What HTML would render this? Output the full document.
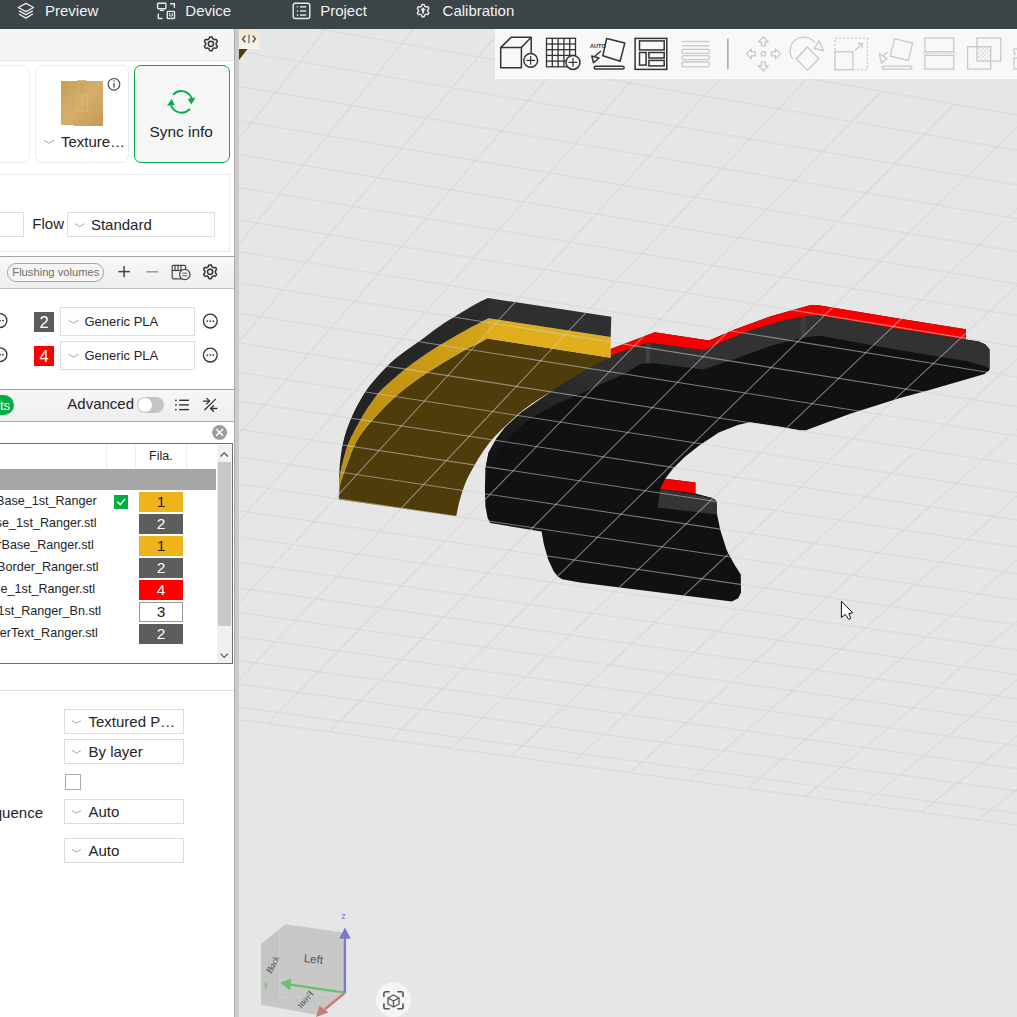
<!DOCTYPE html><html><head><meta charset="utf-8"><style>
html,body{margin:0;padding:0;width:1017px;height:1017px;overflow:hidden;background:#e6e6e6;font-family:"Liberation Sans",sans-serif}
.t{position:absolute;white-space:nowrap}.b{position:absolute;box-sizing:border-box}
</style></head><body>
<div style="position:absolute;left:239px;top:28px;width:778px;height:989px;background:#e6e6e6;overflow:hidden">
<svg width="778" height="989" viewBox="0 0 778 989" style="position:absolute;left:0;top:0"><defs><linearGradient id="gy" gradientUnits="userSpaceOnUse" x1="101" y1="0" x2="372" y2="0"><stop offset="0" stop-color="#bd8e10"/><stop offset="0.3" stop-color="#c89914"/><stop offset="0.545" stop-color="#d6a51a"/><stop offset="0.548" stop-color="#e0ae1c"/><stop offset="1" stop-color="#e1ae1c"/></linearGradient><linearGradient id="gd" gradientUnits="userSpaceOnUse" x1="101" y1="0" x2="372" y2="0"><stop offset="0" stop-color="#222222"/><stop offset="0.545" stop-color="#2b2b2b"/><stop offset="0.548" stop-color="#2f2f2f"/><stop offset="1" stop-color="#2f2f2f"/></linearGradient><linearGradient id="hl" x1="0" y1="0" x2="1" y2="0"><stop offset="0" stop-color="#4a4a4a" stop-opacity="0"/><stop offset="0.5" stop-color="#4a4a4a" stop-opacity="0.9"/><stop offset="1" stop-color="#4a4a4a" stop-opacity="0"/></linearGradient><linearGradient id="g2" gradientUnits="userSpaceOnUse" x1="461" y1="312" x2="248" y2="452"><stop offset="0" stop-color="#323232"/><stop offset="0.45" stop-color="#2e2e2e"/><stop offset="0.8" stop-color="#1c1c1c"/><stop offset="1" stop-color="#111"/></linearGradient></defs>
  <path d="M248.2,310.4 C246.7,311.3 243.6,313.3 239.1,315.6 C234.6,317.9 227.3,321.2 221.4,324.4 C215.5,327.6 209.6,331.4 203.7,335.0 C197.8,338.6 190.2,343.5 186.0,346.2 C181.8,348.9 181.5,349.0 178.2,351.4 C174.9,353.8 170.3,357.1 166.4,360.3 C162.5,363.5 158.5,366.7 154.6,370.3 C150.7,373.9 147.7,376.9 142.8,382.1 C138.0,387.3 129.9,395.8 125.5,401.5 C121.0,407.2 118.8,411.1 116.1,416.2 C113.5,421.3 112.0,425.5 109.6,432.0 C107.2,438.5 103.2,449.8 101.6,455.1 C100.1,460.4 100.6,461.3 100.3,464.0 C100.0,466.7 99.9,470.2 99.8,471.5 L217.2,488.2 C217.8,485.7 218.9,478.9 220.5,473.1 C222.1,467.3 224.3,459.9 227.0,453.6 C229.7,447.3 232.9,441.5 236.7,435.2 C240.5,428.9 244.7,421.9 249.6,415.8 C254.5,409.7 259.0,405.0 265.9,398.5 C272.8,392.0 280.1,384.6 291.0,377.0 C301.9,369.4 324.3,357.0 331.0,353.0 L372.0,329.8 Z" fill="#4e3c0a"/>
  <polygon points="371.7,320.9 415.9,304.2 470.0,312.5 496.4,301.2 531.8,288.2 571.9,277.0 581.0,277.6 661.0,290.8 726.9,301.2 726.9,311.5 739.7,313.5 746.5,316.4 750.5,321.3 750.5,342.0 745.6,345.9 690.5,362.0 661.0,370.1 611.1,385.8 579.7,397.6 567.1,402.3 560.8,402.3 540.3,398.4 511.0,394.3 499.5,396.7 479.8,404.6 460.2,417.4 445.4,429.2 433.6,441.0 426.2,450.8 456.4,454.6 456.4,465.4 473.7,469.9 477.5,473.1 478.1,486.5 481.3,501.9 487.7,522.3 495.4,536.4 501.8,546.6 502.0,564.5 499.2,570.3 492.8,573.5 341.0,554.4 323.2,551.2 318.8,548.5 314.5,543.1 309.1,531.2 304.8,516.1 302.6,503.6 251.3,495.0 248.6,490.1 246.4,478.2 245.9,462.0 246.4,440.6 249.6,424.4 257.5,410.4 265.8,399.8 282.3,384.4 301.0,371.4 321.0,358.1 348.1,341.6 371.7,329.8" fill="#111111"/>
  <polygon points="371.7,327.4 408.9,314.4 465.0,322.3 481.0,315.0 508.2,303.6 543.6,292.4 567.2,288.2 581.0,287.6 661.0,301.2 726.9,311.5 739.7,313.5 746.5,316.4 750.5,321.3 750.5,341.0 747.5,339.0 729.8,333.6 661.0,322.3 581.0,307.7 567.2,308.9 531.8,317.7 496.4,330.7 463.9,341.6 412.8,334.9 401.0,336.1 387.0,345.1 348.1,362.8 319.5,375.0 301.0,385.0 288.2,392.7 273.4,406.2 258.7,422.0 251.0,442.0 246.4,440.6 249.6,424.4 257.5,410.4 265.8,399.8 282.3,384.4 301.0,371.4 321.0,358.1 348.1,341.6 371.7,329.8" fill="url(#g2)"/>
  <polygon points="371.7,320.9 415.9,304.2 470.0,312.5 496.4,301.2 531.8,288.2 571.9,277.0 581.0,277.6 661.0,290.8 726.9,301.2 726.9,311.5 661.0,301.2 581.0,287.6 567.2,288.2 543.6,292.4 508.2,303.6 481.0,315.0 465.0,322.3 408.9,314.4 371.7,327.4" fill="#f80000"/>
  <clipPath id="gcl"><polygon points="371.7,327.4 408.9,314.4 465.0,322.3 481.0,315.0 508.2,303.6 543.6,292.4 567.2,288.2 581.0,287.6 661.0,301.2 726.9,311.5 739.7,313.5 746.5,316.4 750.5,321.3 750.5,341.0 747.5,339.0 729.8,333.6 661.0,322.3 581.0,307.7 567.2,308.9 531.8,317.7 496.4,330.7 463.9,341.6 412.8,334.9 401.0,336.1 387.0,345.1 348.1,362.8 319.5,375.0 301.0,385.0 288.2,392.7 273.4,406.2 258.7,422.0 251.0,442.0 246.4,440.6 249.6,424.4 257.5,410.4 265.8,399.8 282.3,384.4 301.0,371.4 321.0,358.1 348.1,341.6 371.7,329.8"/></clipPath><rect x="405.5" y="310" width="7" height="30" fill="url(#hl)" clip-path="url(#gcl)"/><rect x="560" y="284" width="9" height="30" fill="url(#hl)" opacity="0.6" clip-path="url(#gcl)"/>
  <polygon points="421.3,460.7 473.7,469.9 477.5,473.1 478.1,486.5 418.7,479.5" fill="#353535"/>
  <polygon points="426.2,450.8 456.4,454.6 456.4,465.4 421.3,460.7" fill="#f80000"/>
  <path d="M249.4,290.3 C245.7,292.2 234.9,297.8 227.3,302.0 C219.7,306.2 210.6,311.5 203.7,315.6 C196.8,319.7 192.4,322.4 186.0,326.8 C179.6,331.2 172.4,336.2 165.2,342.0 C158.0,347.8 148.0,356.5 142.8,361.5 C137.7,366.5 137.4,367.8 134.3,372.0 C131.2,376.2 127.3,381.8 124.3,386.7 C121.3,391.6 118.7,396.6 116.1,401.5 C113.6,406.4 111.0,411.1 109.0,416.2 C107.0,421.3 105.5,427.4 104.3,432.0 C103.1,436.6 102.3,439.8 101.6,443.6 C100.9,447.5 100.6,450.5 100.3,455.1 C100.0,459.8 99.9,468.8 99.8,471.5 C99.9,470.2 100.0,466.7 100.3,464.0 C100.6,461.3 100.1,460.4 101.6,455.1 C103.2,449.8 107.2,438.5 109.6,432.0 C112.0,425.5 113.5,421.3 116.1,416.2 C118.8,411.1 121.0,407.2 125.5,401.5 C129.9,395.8 138.0,387.3 142.8,382.1 C147.7,376.9 150.7,373.9 154.6,370.3 C158.5,366.7 162.5,363.5 166.4,360.3 C170.3,357.1 174.9,353.8 178.2,351.4 C181.5,349.0 181.8,348.9 186.0,346.2 C190.2,343.5 197.8,338.6 203.7,335.0 C209.6,331.4 215.5,327.6 221.4,324.4 C227.3,321.2 234.6,317.9 239.1,315.6 C243.6,313.3 246.7,311.3 248.2,310.4 L371.7,329.8 L371.7,309.1 Z" fill="url(#gy)"/>
  <path d="M248.8,270.0 C246.7,271.0 241.4,273.4 236.4,276.2 C231.4,279.0 224.6,283.2 218.7,286.8 C212.8,290.4 207.5,293.5 201.0,298.0 C194.5,302.5 187.1,308.3 179.6,313.8 C172.1,319.3 161.8,326.2 156.0,330.9 C150.2,335.6 148.8,337.6 144.6,342.0 C140.4,346.4 134.9,352.3 131.0,357.3 C127.1,362.3 124.3,367.1 121.4,372.0 C118.5,376.9 116.0,381.8 113.7,386.7 C111.4,391.6 109.5,396.6 107.8,401.5 C106.1,406.4 104.8,411.1 103.7,416.2 C102.6,421.3 101.9,427.0 101.3,432.0 C100.7,437.0 100.6,439.6 100.3,446.2 C100.1,452.8 99.9,467.3 99.8,471.5 C99.9,468.8 100.0,459.8 100.3,455.1 C100.6,450.5 100.9,447.5 101.6,443.6 C102.3,439.8 103.1,436.6 104.3,432.0 C105.5,427.4 107.0,421.3 109.0,416.2 C111.0,411.1 113.6,406.4 116.1,401.5 C118.7,396.6 121.3,391.6 124.3,386.7 C127.3,381.8 131.2,376.2 134.3,372.0 C137.4,367.8 137.7,366.5 142.8,361.5 C148.0,356.5 158.0,347.8 165.2,342.0 C172.4,336.2 179.6,331.2 186.0,326.8 C192.4,322.4 196.8,319.7 203.7,315.6 C210.6,311.5 219.7,306.2 227.3,302.0 C234.9,297.8 245.7,292.2 249.4,290.3 L371.7,309.1 L372.3,288.8 Z" fill="url(#gd)"/>
  <g stroke="#cfcfcf" stroke-opacity="0.55" stroke-width="1.1" fill="none"><line x1="-207.1" y1="-86.1" x2="-674.1" y2="600.1"/><line x1="-126.6" y1="-71.9" x2="-608.0" y2="609.1"/><line x1="-46.7" y1="-57.9" x2="-542.3" y2="618.0"/><line x1="32.5" y1="-43.9" x2="-477.1" y2="626.9"/><line x1="110.9" y1="-30.1" x2="-412.4" y2="635.6"/><line x1="188.8" y1="-16.4" x2="-348.1" y2="644.4"/><line x1="265.9" y1="-2.9" x2="-284.2" y2="653.0"/><line x1="342.5" y1="10.6" x2="-220.8" y2="661.7"/><line x1="418.3" y1="23.9" x2="-157.8" y2="670.2"/><line x1="493.6" y1="37.2" x2="-95.2" y2="678.7"/><line x1="568.2" y1="50.3" x2="-33.0" y2="687.1"/><line x1="642.2" y1="63.3" x2="28.8" y2="695.5"/><line x1="715.6" y1="76.2" x2="90.1" y2="703.9"/><line x1="788.4" y1="89.0" x2="151.0" y2="712.1"/><line x1="860.6" y1="101.7" x2="211.6" y2="720.3"/><line x1="932.2" y1="114.3" x2="271.7" y2="728.5"/><line x1="1003.3" y1="126.8" x2="331.4" y2="736.6"/><line x1="1073.7" y1="139.2" x2="390.8" y2="744.7"/><line x1="1143.6" y1="151.5" x2="449.8" y2="752.7"/><line x1="1212.9" y1="163.7" x2="508.3" y2="760.6"/><line x1="1281.7" y1="175.8" x2="566.5" y2="768.5"/><line x1="1350.0" y1="187.8" x2="624.4" y2="776.4"/><line x1="1417.7" y1="199.7" x2="681.8" y2="784.2"/><line x1="1484.8" y1="211.5" x2="738.9" y2="791.9"/><line x1="1551.5" y1="223.2" x2="795.6" y2="799.6"/><line x1="1617.6" y1="234.8" x2="852.0" y2="807.3"/><line x1="1683.2" y1="246.4" x2="908.0" y2="814.9"/><line x1="1748.3" y1="257.8" x2="963.6" y2="822.4"/><line x1="1812.9" y1="269.2" x2="1018.9" y2="829.9"/><line x1="1877.0" y1="280.4" x2="1073.8" y2="837.4"/><line x1="-207.1" y1="-86.1" x2="1940.6" y2="291.6"/><line x1="-229.7" y1="-52.8" x2="1902.1" y2="317.8"/><line x1="-251.9" y1="-20.2" x2="1864.2" y2="343.6"/><line x1="-273.7" y1="11.8" x2="1827.1" y2="368.9"/><line x1="-295.0" y1="43.2" x2="1790.5" y2="393.8"/><line x1="-316.0" y1="74.0" x2="1754.5" y2="418.3"/><line x1="-336.6" y1="104.2" x2="1719.2" y2="442.4"/><line x1="-356.8" y1="133.9" x2="1684.4" y2="466.1"/><line x1="-376.6" y1="163.0" x2="1650.1" y2="489.4"/><line x1="-396.1" y1="191.6" x2="1616.5" y2="512.4"/><line x1="-415.2" y1="219.7" x2="1583.3" y2="535.0"/><line x1="-434.0" y1="247.3" x2="1550.7" y2="557.2"/><line x1="-452.4" y1="274.5" x2="1518.6" y2="579.0"/><line x1="-470.6" y1="301.1" x2="1487.0" y2="600.6"/><line x1="-488.4" y1="327.3" x2="1455.9" y2="621.8"/><line x1="-505.9" y1="353.1" x2="1425.2" y2="642.6"/><line x1="-523.2" y1="378.4" x2="1395.1" y2="663.2"/><line x1="-540.1" y1="403.3" x2="1365.3" y2="683.4"/><line x1="-556.7" y1="427.7" x2="1336.1" y2="703.4"/><line x1="-573.1" y1="451.8" x2="1307.2" y2="723.0"/><line x1="-589.2" y1="475.5" x2="1278.8" y2="742.4"/><line x1="-605.1" y1="498.8" x2="1250.8" y2="761.4"/><line x1="-620.7" y1="521.7" x2="1223.2" y2="780.2"/><line x1="-636.0" y1="544.2" x2="1196.0" y2="798.7"/><line x1="-651.1" y1="566.4" x2="1169.2" y2="817.0"/><line x1="-666.0" y1="588.3" x2="1142.8" y2="835.0"/><line x1="-674.1" y1="600.1" x2="1128.4" y2="844.8"/></g>
</svg></div>
<div class="b" style="left:0.0px;top:0.0px;width:1017.0px;height:28.5px;background:#3b4446"></div>
<div class="t" style="left:45.0px;top:2.7px;font-size:15px;line-height:15px;color:#f2f2f2;">Preview</div>
<div class="t" style="left:185.3px;top:2.7px;font-size:15px;line-height:15px;color:#f2f2f2;">Device</div>
<div class="t" style="left:320.2px;top:2.7px;font-size:15px;line-height:15px;color:#f2f2f2;">Project</div>
<div class="t" style="left:442.6px;top:2.7px;font-size:15px;line-height:15px;color:#f2f2f2;">Calibration</div>
<div class="b" style="left:0.0px;top:28.5px;width:234.2px;height:988.5px;background:#ffffff"></div>
<div class="b" style="left:234.2px;top:28.5px;width:4.8px;height:988.5px;background:#cbcbcb;border-left:1px solid #a9a9a9"></div>
<div class="b" style="left:0.0px;top:28.5px;width:234.2px;height:32.0px;background:#f5f5f5;border-bottom:1px solid #e2e2e2"></div>
<div class="b" style="left:-20.0px;top:65.0px;width:49.5px;height:97.5px;border:1px solid #ececec;border-radius:8px;background:#fff"></div>
<div class="b" style="left:34.7px;top:65.0px;width:94.6px;height:97.5px;border:1px solid #ececec;border-radius:8px;background:#fff"></div>
<div class="b" style="left:134.0px;top:65.0px;width:95.6px;height:97.6px;border:1px solid #00ae42;border-radius:7px;background:#f6f6f6"></div>
<div class="b" style="left:61.0px;top:80.5px;width:42.0px;height:44.8px;background:linear-gradient(135deg,#c9a15c,#d6b272 60%,#c29a55)"></div>
<div class="t" style="left:60.9px;top:133.8px;font-size:15px;line-height:15px;color:#1f2426;">Texture…</div>
<div class="t" style="left:149.6px;top:124.0px;font-size:15.4px;line-height:15.4px;color:#1f2426;">Sync info</div>
<div class="b" style="left:-10.0px;top:173.5px;width:239.6px;height:78.5px;border:1px solid #ebebeb"></div>
<div class="b" style="left:-10.0px;top:212.4px;width:33.6px;height:24.8px;border:1px solid #dedede"></div>
<div class="b" style="left:67.3px;top:212.4px;width:147.4px;height:24.8px;border:1px solid #dedede"></div>
<div class="t" style="left:32.3px;top:216.4px;font-size:15px;line-height:15px;color:#1f2426;">Flow</div>
<div class="t" style="left:90.9px;top:216.8px;font-size:15px;line-height:15px;color:#1f2426;">Standard</div>
<div class="b" style="left:0.0px;top:256.3px;width:234.2px;height:32.7px;background:linear-gradient(180deg,#f8f8f8,#eeeeee);border-top:1.3px solid #a4a4a4;border-bottom:1px solid #c4c4c4"></div>
<div class="b" style="left:7.1px;top:263.0px;width:96.7px;height:18.5px;border:1px solid #a8a8a8;border-radius:9px;background:#f4f4f4"></div>
<div class="t" style="left:12.3px;top:266.8px;font-size:11.2px;line-height:11.2px;color:#6f6f6f;">Flushing volumes</div>
<div class="b" style="left:34.2px;top:312.0px;width:19.6px;height:19.8px;background:#5b5b5b"></div>
<div class="b" style="left:34.2px;top:345.9px;width:19.6px;height:20.1px;background:#fe0000"></div>
<div class="t" style="left:44.0px;top:313.6px;font-size:16.5px;line-height:16.5px;color:#fff;transform:translateX(-50%)">2</div>
<div class="t" style="left:44.0px;top:347.5px;font-size:16.5px;line-height:16.5px;color:#fff;transform:translateX(-50%)">4</div>
<div class="b" style="left:60.4px;top:307.2px;width:135.0px;height:29.3px;border:1px solid #dedede"></div>
<div class="b" style="left:60.4px;top:341.2px;width:135.0px;height:29.3px;border:1px solid #dedede"></div>
<div class="t" style="left:84.5px;top:315.0px;font-size:13px;line-height:13px;color:#1f2426;">Generic PLA</div>
<div class="t" style="left:84.5px;top:349.0px;font-size:13px;line-height:13px;color:#1f2426;">Generic PLA</div>
<div class="b" style="left:0.0px;top:388.8px;width:234.2px;height:32.8px;background:linear-gradient(180deg,#f7f7f7,#eeeeee);border-top:1.3px solid #a0a0a0;border-bottom:1.3px solid #acacac"></div>
<div class="b" style="left:-20.0px;top:395.0px;width:34.2px;height:19.6px;background:#00ae42;border-radius:10px"></div>
<div class="t" style="left:0.0px;top:398.5px;font-size:13px;line-height:13px;color:#fff;">ts</div>
<div class="t" style="left:67.3px;top:395.7px;font-size:15px;line-height:15px;color:#1f2426;">Advanced</div>
<div class="b" style="left:136.9px;top:397.4px;width:27.1px;height:15.3px;background:#c4c4c4;border-radius:8px"></div>
<div class="b" style="left:138.0px;top:398.4px;width:14.0px;height:13.3px;background:#fff;border-radius:7px"></div>
<div class="b" style="left:-10.0px;top:443.2px;width:243.0px;height:221.3px;border:1.6px solid #6e6e6e;border-left:none;background:#fff"></div>
<div class="b" style="left:105.5px;top:444.5px;width:1.0px;height:24.3px;background:#ececec"></div>
<div class="b" style="left:135.2px;top:444.5px;width:1.0px;height:24.3px;background:#ececec"></div>
<div class="b" style="left:185.7px;top:444.5px;width:1.0px;height:24.3px;background:#ececec"></div>
<div class="t" style="left:149.1px;top:450.2px;font-size:12.5px;line-height:12.5px;color:#1f2426;">Fila.</div>
<div class="b" style="left:0.0px;top:468.8px;width:216.0px;height:21.5px;background:#a5a5a5"></div>
<div class="b" style="left:216.6px;top:444.8px;width:15.4px;height:218.0px;background:#f0f0f0"></div>
<div class="b" style="left:217.5px;top:462.4px;width:13.5px;height:163.7px;background:#c8c8c8"></div>
<div class="t" style="right:920.2px;top:495.4px;font-size:12.6px;line-height:12.6px;color:#1f2426;">Base_1st_Ranger</div>
<div class="b" style="left:139.2px;top:492.4px;width:43.7px;height:19.3px;background:#efb31c;"></div>
<div class="t" style="left:161.0px;top:493.9px;font-size:15.5px;line-height:15.5px;color:#222;transform:translateX(-50%)">1</div>
<div class="t" style="right:920.4px;top:517.4px;font-size:12.6px;line-height:12.6px;color:#1f2426;">se_1st_Ranger.stl</div>
<div class="b" style="left:139.2px;top:514.4px;width:43.7px;height:19.3px;background:#5d5d5d;"></div>
<div class="t" style="left:161.0px;top:515.9px;font-size:15.5px;line-height:15.5px;color:#fff;transform:translateX(-50%)">2</div>
<div class="t" style="right:923.1px;top:539.4px;font-size:12.6px;line-height:12.6px;color:#1f2426;">rBase_Ranger.stl</div>
<div class="b" style="left:139.2px;top:536.4px;width:43.7px;height:19.3px;background:#efb31c;"></div>
<div class="t" style="left:161.0px;top:537.9px;font-size:15.5px;line-height:15.5px;color:#222;transform:translateX(-50%)">1</div>
<div class="t" style="right:918.4px;top:561.4px;font-size:12.6px;line-height:12.6px;color:#1f2426;">Border_Ranger.stl</div>
<div class="b" style="left:139.2px;top:558.4px;width:43.7px;height:19.3px;background:#5d5d5d;"></div>
<div class="t" style="left:161.0px;top:559.9px;font-size:15.5px;line-height:15.5px;color:#fff;transform:translateX(-50%)">2</div>
<div class="t" style="right:921.9px;top:583.4px;font-size:12.6px;line-height:12.6px;color:#1f2426;">e_1st_Ranger.stl</div>
<div class="b" style="left:139.2px;top:580.4px;width:43.7px;height:19.3px;background:#fe0000;"></div>
<div class="t" style="left:161.0px;top:581.9px;font-size:15.5px;line-height:15.5px;color:#fff;transform:translateX(-50%)">4</div>
<div class="t" style="right:916.0px;top:605.4px;font-size:12.6px;line-height:12.6px;color:#1f2426;">1st_Ranger_Bn.stl</div>
<div class="b" style="left:139.2px;top:602.4px;width:43.7px;height:19.3px;background:#ffffff;border:1px solid #999;"></div>
<div class="t" style="left:161.0px;top:603.9px;font-size:15.5px;line-height:15.5px;color:#222;transform:translateX(-50%)">3</div>
<div class="t" style="right:919.2px;top:627.4px;font-size:12.6px;line-height:12.6px;color:#1f2426;">erText_Ranger.stl</div>
<div class="b" style="left:139.2px;top:624.4px;width:43.7px;height:19.3px;background:#5d5d5d;"></div>
<div class="t" style="left:161.0px;top:625.9px;font-size:15.5px;line-height:15.5px;color:#fff;transform:translateX(-50%)">2</div>
<div class="b" style="left:114.0px;top:494.7px;width:14.1px;height:14.2px;background:#00ae42"></div>
<div class="b" style="left:0.0px;top:690.0px;width:234.2px;height:1.0px;background:#dcdcdc"></div>
<div class="b" style="left:64.2px;top:709.4px;width:119.4px;height:25.1px;border:1px solid #dcdcdc"></div>
<div class="t" style="left:88.5px;top:714.0px;font-size:15px;line-height:15px;color:#1f2426;">Textured P…</div>
<div class="b" style="left:64.2px;top:739.1px;width:119.4px;height:25.1px;border:1px solid #dcdcdc"></div>
<div class="t" style="left:88.5px;top:743.7px;font-size:15px;line-height:15px;color:#1f2426;">By layer</div>
<div class="b" style="left:64.2px;top:799.3px;width:119.4px;height:25.1px;border:1px solid #dcdcdc"></div>
<div class="t" style="left:88.5px;top:803.9px;font-size:15px;line-height:15px;color:#1f2426;">Auto</div>
<div class="b" style="left:64.2px;top:838.2px;width:119.4px;height:25.1px;border:1px solid #dcdcdc"></div>
<div class="t" style="left:88.5px;top:842.8px;font-size:15px;line-height:15px;color:#1f2426;">Auto</div>
<div class="b" style="left:65.4px;top:774.2px;width:15.3px;height:15.4px;border:1px solid #aaa"></div>
<div class="t" style="right:974.0px;top:804.7px;font-size:15px;line-height:15px;color:#1f2426;">quence</div>
<div class="b" style="left:495.0px;top:28.5px;width:522.0px;height:50.5px;background:#f8f8f8"></div>
<div class="b" style="left:239.0px;top:28.5px;width:19.5px;height:20.2px;background:linear-gradient(180deg,#f2e6c8 0%,#f4eddb 45%,#f7f5ef 100%)"></div>
<svg width="1017" height="1017" viewBox="0 0 1017 1017" style="position:absolute;left:0;top:0"><g fill="none" stroke="#e9e9e9" stroke-width="1.4" stroke-linejoin="round"><polygon points="18.3,7.5 25.9,3.3 33.6,7.5 25.9,11.6"/><polyline points="19,10.8 25.9,14.7 32.8,10.8"/><polyline points="19,14 25.9,18.1 32.8,14"/><rect x="157.6" y="3.3" width="8.3" height="5.4" rx="0.6"/><line x1="159.8" y1="10.4" x2="164" y2="10.4"/><polyline points="170.1,3.7 174.4,3.7 174.4,7.7"/><polyline points="158.3,13.6 158.3,18.5 162.6,18.5"/><rect x="167.3" y="11.4" width="7.2" height="7.1" rx="0.6"/><polyline points="169.6,12.8 169.6,16 172.2,16 172.2,12.8" stroke-width="1"/><rect x="293.2" y="3.2" width="16.6" height="15.3" rx="2.2"/><line x1="300" y1="6.8" x2="306.2" y2="6.8"/><line x1="300" y1="11" x2="306.2" y2="11"/><line x1="300" y1="15.1" x2="306.2" y2="15.1"/></g><g fill="#e9e9e9"><circle cx="297.5" cy="6.8" r="0.8"/><circle cx="297.5" cy="11" r="0.8"/><circle cx="297.5" cy="15.1" r="0.8"/></g><path d="M423.10,4.40 L423.42,4.41 L423.75,4.43 L424.07,4.48 L424.31,4.90 L424.49,5.42 L424.61,5.95 L424.75,6.31 L424.97,6.40 L425.19,6.50 L425.40,6.62 L425.61,6.74 L425.80,6.88 L425.99,7.03 L426.37,6.97 L426.89,6.81 L427.43,6.70 L427.92,6.70 L428.12,6.96 L428.30,7.22 L428.47,7.50 L428.62,7.79 L428.76,8.08 L428.89,8.38 L428.64,8.80 L428.28,9.21 L427.88,9.58 L427.64,9.88 L427.67,10.12 L427.69,10.36 L427.70,10.60 L427.69,10.84 L427.67,11.08 L427.64,11.32 L427.88,11.62 L428.28,11.99 L428.64,12.40 L428.89,12.82 L428.76,13.12 L428.62,13.41 L428.47,13.70 L428.30,13.98 L428.12,14.24 L427.92,14.50 L427.43,14.50 L426.89,14.39 L426.37,14.23 L425.99,14.17 L425.80,14.32 L425.61,14.46 L425.40,14.58 L425.19,14.70 L424.97,14.80 L424.75,14.89 L424.61,15.25 L424.49,15.78 L424.31,16.30 L424.07,16.72 L423.75,16.77 L423.42,16.79 L423.10,16.80 L422.78,16.79 L422.45,16.77 L422.13,16.72 L421.89,16.30 L421.71,15.78 L421.59,15.25 L421.45,14.89 L421.23,14.80 L421.01,14.70 L420.80,14.58 L420.59,14.46 L420.40,14.32 L420.21,14.17 L419.83,14.23 L419.31,14.39 L418.77,14.50 L418.28,14.50 L418.08,14.24 L417.90,13.98 L417.73,13.70 L417.58,13.41 L417.44,13.12 L417.31,12.82 L417.56,12.40 L417.92,11.99 L418.32,11.62 L418.56,11.32 L418.53,11.08 L418.51,10.84 L418.50,10.60 L418.51,10.36 L418.53,10.12 L418.56,9.88 L418.32,9.58 L417.92,9.21 L417.56,8.80 L417.31,8.38 L417.44,8.08 L417.58,7.79 L417.73,7.50 L417.90,7.22 L418.08,6.96 L418.28,6.70 L418.77,6.70 L419.31,6.81 L419.83,6.97 L420.21,7.03 L420.40,6.88 L420.59,6.74 L420.80,6.62 L421.01,6.50 L421.23,6.40 L421.45,6.31 L421.59,5.95 L421.71,5.42 L421.89,4.90 L422.13,4.48 L422.45,4.43 L422.78,4.41 L423.10,4.40Z" fill="none" stroke="#e9e9e9" stroke-width="1.4" stroke-linejoin="round"/><circle cx="423.1" cy="10.6" r="0" fill="none" stroke="#e9e9e9" stroke-width="1.4"/><path d="M423.1,7.2 L425.8,10.2 L424.1,10.2 L424.1,13.5 L422.1,13.5 L422.1,10.2 L420.4,10.2 Z" fill="#e9e9e9"/><path d="M210.90,36.90 L211.26,36.91 L211.62,36.94 L211.98,36.98 L212.26,37.41 L212.47,37.95 L212.63,38.48 L212.80,38.85 L213.06,38.96 L213.31,39.08 L213.55,39.21 L213.79,39.36 L214.02,39.51 L214.24,39.68 L214.64,39.65 L215.19,39.51 L215.75,39.43 L216.26,39.46 L216.48,39.74 L216.69,40.04 L216.88,40.35 L217.05,40.67 L217.20,40.99 L217.34,41.33 L217.11,41.78 L216.75,42.23 L216.37,42.64 L216.13,42.97 L216.17,43.25 L216.19,43.52 L216.20,43.80 L216.19,44.08 L216.17,44.35 L216.13,44.63 L216.37,44.96 L216.75,45.37 L217.11,45.82 L217.34,46.27 L217.20,46.61 L217.05,46.93 L216.88,47.25 L216.69,47.56 L216.48,47.86 L216.26,48.14 L215.75,48.17 L215.19,48.09 L214.64,47.95 L214.24,47.92 L214.02,48.09 L213.79,48.24 L213.55,48.39 L213.31,48.52 L213.06,48.64 L212.80,48.75 L212.63,49.12 L212.47,49.65 L212.26,50.19 L211.98,50.62 L211.62,50.66 L211.26,50.69 L210.90,50.70 L210.54,50.69 L210.18,50.66 L209.82,50.62 L209.54,50.19 L209.33,49.65 L209.17,49.12 L209.00,48.75 L208.74,48.64 L208.49,48.52 L208.25,48.39 L208.01,48.24 L207.78,48.09 L207.56,47.92 L207.16,47.95 L206.61,48.09 L206.05,48.17 L205.54,48.14 L205.32,47.86 L205.11,47.56 L204.92,47.25 L204.75,46.93 L204.60,46.61 L204.46,46.27 L204.69,45.82 L205.05,45.37 L205.43,44.96 L205.67,44.63 L205.63,44.35 L205.61,44.08 L205.60,43.80 L205.61,43.52 L205.63,43.25 L205.67,42.97 L205.43,42.64 L205.05,42.23 L204.69,41.78 L204.46,41.33 L204.60,40.99 L204.75,40.67 L204.92,40.35 L205.11,40.04 L205.32,39.74 L205.54,39.46 L206.05,39.43 L206.61,39.51 L207.16,39.65 L207.56,39.68 L207.78,39.51 L208.01,39.36 L208.25,39.21 L208.49,39.08 L208.74,38.96 L209.00,38.85 L209.17,38.48 L209.33,37.95 L209.54,37.41 L209.82,36.98 L210.18,36.94 L210.54,36.91 L210.90,36.90Z" fill="none" stroke="#333" stroke-width="1.5" stroke-linejoin="round"/><circle cx="210.9" cy="43.8" r="2.6" fill="none" stroke="#333" stroke-width="1.5"/><defs><linearGradient id="gold" x1="0" y1="0" x2="1" y2="1"><stop offset="0" stop-color="#c99d57"/><stop offset="0.5" stop-color="#d5ae6c"/><stop offset="1" stop-color="#c59a55"/></linearGradient></defs><path d="M61.3,81.3 L77,81.3 L77.6,80.2 L86.4,80.2 L87,81.3 L102.9,81.3 L102.9,125.9 L74,125.9 L73.4,125 L61.3,125 Z" fill="url(#gold)"/><rect x="76.4" y="94.9" width="11.4" height="16.2" fill="none" stroke="#ddc08a" stroke-width="0.6"/><line x1="82.1" y1="94.9" x2="82.1" y2="111.1" stroke="#ddc08a" stroke-width="0.6"/><circle cx="114" cy="84.3" r="5.8" fill="none" stroke="#444" stroke-width="1.1"/><line x1="114" y1="83" x2="114" y2="87.6" stroke="#444" stroke-width="1.3"/><circle cx="114" cy="81" r="0.8" fill="#444"/><polyline points="44.0,140.3 49.0,143.3 54.0,140.3" fill="none" stroke="#a8a8a8" stroke-width="1"/><g fill="none" stroke="#00ae42" stroke-width="1.9" stroke-linecap="round"><path d="M173.6,94.2 A11,11 0 0 1 191.7,98.5"/><path d="M189.4,109.3 A11,11 0 0 1 171.2,105.5"/></g><polygon points="195.6,97.4 191.3,104.6 187.9,98.9" fill="#00ae42"/><polygon points="166.9,105.8 171.7,98.9 174.6,105" fill="#00ae42"/><polyline points="74.6,223.7 79.6,226.7 84.6,223.7" fill="none" stroke="#a8a8a8" stroke-width="1"/><polyline points="68.5,320.2 73.5,323.2 78.5,320.2" fill="none" stroke="#a8a8a8" stroke-width="1"/><polyline points="68.5,354.2 73.5,357.2 78.5,354.2" fill="none" stroke="#a8a8a8" stroke-width="1"/><polyline points="72.0,720.6 76.5,723.2 81.0,720.6" fill="none" stroke="#a8a8a8" stroke-width="1"/><polyline points="72.0,750.4 76.5,753.0 81.0,750.4" fill="none" stroke="#a8a8a8" stroke-width="1"/><polyline points="72.0,810.6 76.5,813.2 81.0,810.6" fill="none" stroke="#a8a8a8" stroke-width="1"/><polyline points="72.0,849.5 76.5,852.1 81.0,849.5" fill="none" stroke="#a8a8a8" stroke-width="1"/><g stroke="#444" stroke-width="1.5"><line x1="118.4" y1="271.6" x2="129.8" y2="271.6"/><line x1="124.1" y1="265.9" x2="124.1" y2="277.3"/></g><line x1="146.2" y1="271.8" x2="158.1" y2="271.8" stroke="#9b9b9b" stroke-width="1.5"/><g fill="none" stroke="#444" stroke-width="1.2"><rect x="172.2" y="265.3" width="13.5" height="13.5" rx="1.5"/><line x1="175" y1="266" x2="175" y2="270"/><line x1="178" y1="266" x2="178" y2="270"/><line x1="181" y1="266" x2="181" y2="270"/><line x1="172.2" y1="270.5" x2="185.7" y2="270.5"/></g><circle cx="184.8" cy="274.5" r="5.2" fill="#f3f3f3" stroke="#444" stroke-width="1.2"/><g stroke="#444" stroke-width="0.9"><line x1="182.3" y1="273.2" x2="187.2" y2="273.2"/><line x1="182.3" y1="275.8" x2="187.2" y2="275.8"/></g><path d="M210.10,264.90 L210.46,264.91 L210.82,264.94 L211.18,264.98 L211.46,265.41 L211.67,265.95 L211.83,266.48 L212.00,266.85 L212.26,266.96 L212.51,267.08 L212.75,267.21 L212.99,267.36 L213.22,267.51 L213.44,267.68 L213.84,267.65 L214.39,267.51 L214.95,267.43 L215.46,267.46 L215.68,267.74 L215.89,268.04 L216.08,268.35 L216.25,268.67 L216.40,268.99 L216.54,269.33 L216.31,269.78 L215.95,270.23 L215.57,270.64 L215.33,270.97 L215.37,271.25 L215.39,271.52 L215.40,271.80 L215.39,272.08 L215.37,272.35 L215.33,272.63 L215.57,272.96 L215.95,273.37 L216.31,273.82 L216.54,274.27 L216.40,274.61 L216.25,274.93 L216.08,275.25 L215.89,275.56 L215.68,275.86 L215.46,276.14 L214.95,276.17 L214.39,276.09 L213.84,275.95 L213.44,275.92 L213.22,276.09 L212.99,276.24 L212.75,276.39 L212.51,276.52 L212.26,276.64 L212.00,276.75 L211.83,277.12 L211.67,277.65 L211.46,278.19 L211.18,278.62 L210.82,278.66 L210.46,278.69 L210.10,278.70 L209.74,278.69 L209.38,278.66 L209.02,278.62 L208.74,278.19 L208.53,277.65 L208.37,277.12 L208.20,276.75 L207.94,276.64 L207.69,276.52 L207.45,276.39 L207.21,276.24 L206.98,276.09 L206.76,275.92 L206.36,275.95 L205.81,276.09 L205.25,276.17 L204.74,276.14 L204.52,275.86 L204.31,275.56 L204.12,275.25 L203.95,274.93 L203.80,274.61 L203.66,274.27 L203.89,273.82 L204.25,273.37 L204.63,272.96 L204.87,272.63 L204.83,272.35 L204.81,272.08 L204.80,271.80 L204.81,271.52 L204.83,271.25 L204.87,270.97 L204.63,270.64 L204.25,270.23 L203.89,269.78 L203.66,269.33 L203.80,268.99 L203.95,268.67 L204.12,268.35 L204.31,268.04 L204.52,267.74 L204.74,267.46 L205.25,267.43 L205.81,267.51 L206.36,267.65 L206.76,267.68 L206.98,267.51 L207.21,267.36 L207.45,267.21 L207.69,267.08 L207.94,266.96 L208.20,266.85 L208.37,266.48 L208.53,265.95 L208.74,265.41 L209.02,264.98 L209.38,264.94 L209.74,264.91 L210.10,264.90Z" fill="none" stroke="#333" stroke-width="1.5" stroke-linejoin="round"/><circle cx="210.1" cy="271.8" r="2.6" fill="none" stroke="#333" stroke-width="1.5"/><circle cx="0" cy="320.6" r="6.9" fill="none" stroke="#333" stroke-width="1.3"/><circle cx="-3" cy="320.6" r="0.9" fill="#333"/><circle cx="0" cy="320.6" r="0.9" fill="#333"/><circle cx="3" cy="320.6" r="0.9" fill="#333"/><circle cx="0" cy="354.7" r="6.9" fill="none" stroke="#333" stroke-width="1.3"/><circle cx="-3" cy="354.7" r="0.9" fill="#333"/><circle cx="0" cy="354.7" r="0.9" fill="#333"/><circle cx="3" cy="354.7" r="0.9" fill="#333"/><circle cx="210.3" cy="321.1" r="6.9" fill="none" stroke="#333" stroke-width="1.3"/><circle cx="207.3" cy="321.1" r="0.9" fill="#333"/><circle cx="210.3" cy="321.1" r="0.9" fill="#333"/><circle cx="213.3" cy="321.1" r="0.9" fill="#333"/><circle cx="210.3" cy="355.1" r="6.9" fill="none" stroke="#333" stroke-width="1.3"/><circle cx="207.3" cy="355.1" r="0.9" fill="#333"/><circle cx="210.3" cy="355.1" r="0.9" fill="#333"/><circle cx="213.3" cy="355.1" r="0.9" fill="#333"/><g fill="#333"><circle cx="175.9" cy="400.3" r="0.9"/><circle cx="175.9" cy="404.9" r="0.9"/><circle cx="175.9" cy="409.6" r="0.9"/></g><g stroke="#333" stroke-width="1.4"><line x1="179.1" y1="400.3" x2="188.9" y2="400.3"/><line x1="179.1" y1="404.9" x2="188.9" y2="404.9"/><line x1="179.1" y1="409.6" x2="188.9" y2="409.6"/></g><g fill="none" stroke="#333" stroke-width="1.3" stroke-linecap="round"><line x1="204.8" y1="409.7" x2="215.4" y2="399.4"/><line x1="203.3" y1="401.1" x2="209.2" y2="401.1"/><polyline points="206.8,398.4 209.5,401.1 206.8,403.8"/><line x1="210.7" y1="408.5" x2="216.9" y2="408.5"/><polyline points="213.4,405.8 210.7,408.5 213.4,411.2"/></g><circle cx="219.6" cy="432.4" r="7.4" fill="#9c9c9c"/><g stroke="#fff" stroke-width="1.6"><line x1="216.2" y1="429" x2="223" y2="435.8"/><line x1="223" y1="429" x2="216.2" y2="435.8"/></g><polyline points="220.5,456.5 224.2,452.8 227.9,456.5" fill="none" stroke="#555" stroke-width="1.2"/><polyline points="220.5,653.6 224.2,657.3 227.9,653.6" fill="none" stroke="#555" stroke-width="1.2"/><polyline points="117.4,501.8 120.2,504.6 125,499" fill="none" stroke="#fff" stroke-width="1.4"/><polygon points="239,49 247.5,49 239,60.1" fill="#4a3b10"/><g fill="none" stroke="#4d4d4d" stroke-width="1.4"><polyline points="245.3,35.6 242.6,38.9 245.3,42.2"/><polyline points="252.7,35.6 255.4,38.9 252.7,42.2"/></g><line x1="249" y1="34.6" x2="249" y2="43.3" stroke="#8a8a8a" stroke-width="1.6"/><g fill="none" stroke="#333" stroke-width="1.5" stroke-linejoin="round"><rect x="500.7" y="47.6" width="20.7" height="20.2"/><polyline points="500.7,47.6 511.1,37.3 531.2,37.3 521.4,47.6"/><line x1="531.2" y1="37.3" x2="531.2" y2="53.5"/><circle cx="530.7" cy="60.4" r="6.9" fill="#f8f8f8"/><line x1="526.3" y1="60.4" x2="535.1" y2="60.4" stroke-width="1.2"/><line x1="530.7" y1="56" x2="530.7" y2="64.8" stroke-width="1.2"/></g><g fill="none" stroke="#333" stroke-width="1.3"><rect x="546.5" y="38.3" width="29" height="28.5"/><line x1="552.3" y1="38.3" x2="552.3" y2="66.8"/><line x1="546.5" y1="44.0" x2="575.5" y2="44.0"/><line x1="558.1" y1="38.3" x2="558.1" y2="66.8"/><line x1="546.5" y1="49.7" x2="575.5" y2="49.7"/><line x1="563.9" y1="38.3" x2="563.9" y2="66.8"/><line x1="546.5" y1="55.4" x2="575.5" y2="55.4"/><line x1="569.7" y1="38.3" x2="569.7" y2="66.8"/><line x1="546.5" y1="61.1" x2="575.5" y2="61.1"/><circle cx="573" cy="62.4" r="7" fill="#f8f8f8" stroke-width="1.5"/><line x1="568.6" y1="62.4" x2="577.4" y2="62.4" stroke-width="1.2"/><line x1="573" y1="58" x2="573" y2="66.8" stroke-width="1.2"/></g><text x="590" y="47.8" font-family="Liberation Sans" font-weight="bold" font-size="5.6" fill="#333">AUTO</text><g fill="none" stroke="#333" stroke-width="1.5" stroke-linejoin="round"><polygon points="606.7,38.4 624.8,43.1 620.1,61.2 602.8,55.7"/><line x1="601" y1="51" x2="595" y2="56"/><polygon points="591.8,56 599,58 593.5,62.8"/><rect x="594.2" y="66.2" width="29.9" height="2.9" rx="1.4"/></g><g fill="none" stroke="#333" stroke-width="1.5"><rect x="635.1" y="38.4" width="31.7" height="31"/><rect x="639.5" y="40.9" width="24.7" height="9"/><rect x="639.5" y="52.5" width="6.6" height="12.6"/><rect x="648.9" y="52.5" width="15.3" height="5.5"/><rect x="648.9" y="60.4" width="15.3" height="5.5"/></g><g fill="none" stroke="#c8c8c8" stroke-width="1.3"><line x1="682" y1="41.5" x2="709.5" y2="41.5"/><line x1="682" y1="45.8" x2="709.5" y2="45.8"/><rect x="682" y="49.3" width="27.5" height="4" rx="1.5"/><rect x="682" y="55.7" width="27.5" height="4" rx="1.5"/><rect x="682" y="62" width="27.5" height="4.8" rx="1.5"/></g><line x1="727.9" y1="38.4" x2="727.9" y2="69.1" stroke="#9a9a9a" stroke-width="1.3"/><g fill="none" stroke="#c8c8c8" stroke-width="1.3" stroke-linejoin="round"><rect x="761.4" y="51.9" width="4" height="4"/><polygon transform="rotate(0 763.4 53.9)" points="761.4,45.9 761.4,41.9 758.4,41.9 763.4,36.9 768.4,41.9 765.4,41.9 765.4,45.9"/><polygon transform="rotate(90 763.4 53.9)" points="761.4,45.9 761.4,41.9 758.4,41.9 763.4,36.9 768.4,41.9 765.4,41.9 765.4,45.9"/><polygon transform="rotate(180 763.4 53.9)" points="761.4,45.9 761.4,41.9 758.4,41.9 763.4,36.9 768.4,41.9 765.4,41.9 765.4,45.9"/><polygon transform="rotate(270 763.4 53.9)" points="761.4,45.9 761.4,41.9 758.4,41.9 763.4,36.9 768.4,41.9 765.4,41.9 765.4,45.9"/></g><g fill="none" stroke="#c8c8c8" stroke-width="1.3" stroke-linejoin="round"><path d="M792.5,58.5 A13.5,13.5 0 0 1 815,43"/><polygon points="807.5,47 818.8,58.7 807.5,70.4 796.2,58.7"/><polygon points="814.3,48.5 823.3,50.5 819,40.8"/></g><g fill="none" stroke="#c8c8c8" stroke-width="1.3"><rect x="835" y="38.1" width="32.3" height="31.6" stroke-dasharray="2,2"/><rect x="835" y="51.8" width="17.9" height="17.9" fill="#f8f8f8"/><line x1="855" y1="50.5" x2="862" y2="43.5"/><polyline points="857.5,43.3 862.3,43.3 862.3,48"/></g><g fill="none" stroke="#c8c8c8" stroke-width="1.3" stroke-linejoin="round"><polygon points="894.6,38.7 912.6,43.1 908.3,60.4 890.2,56.1"/><line x1="887.5" y1="52" x2="883" y2="56"/><polygon points="879.4,53.5 887,58.5 881.5,63.3"/><rect x="882.3" y="66.2" width="29.6" height="2.9" rx="1.4"/></g><g fill="none" stroke="#c8c8c8" stroke-width="1.3"><rect x="924.9" y="38" width="28.9" height="13.7"/><rect x="924.9" y="55.4" width="28.9" height="13.7"/><line x1="922.8" y1="53.4" x2="956.7" y2="53.4" stroke-dasharray="1.5,1.5"/></g><defs><pattern id="hatch" width="3" height="3" patternUnits="userSpaceOnUse" patternTransform="rotate(45)"><line x1="0" y1="0" x2="0" y2="3" stroke="#c8c8c8" stroke-width="1.2"/></pattern></defs><rect x="977" y="46.7" width="13.7" height="14.4" fill="url(#hatch)"/><g fill="none" stroke="#c8c8c8" stroke-width="1.3"><rect x="967.6" y="46.7" width="23.1" height="22.4"/><rect x="977" y="38" width="23.8" height="23.1"/></g><g fill="none" stroke="#c8c8c8" stroke-width="1.3"><polyline points="1013.5,49 1017,49"/><line x1="1013.5" y1="49" x2="1015" y2="55"/><rect x="1014" y="58" width="5" height="11"/></g><polygon points="261,944.1 279.7,928.7 279.7,998 261,1004.7" fill="#c4c4c4"/><polygon points="279.7,928.7 285.2,924.3 343.6,932.5 344.7,993.1 279.7,998" fill="#c8c8c8"/><polygon points="261,1004.7 279.7,998 344.7,993.1 320.5,1015.5" fill="#c7c7c7"/><text x="0" y="0" font-family="Liberation Sans" font-size="11.5" fill="#555" transform="translate(303.5,962) rotate(6)">Left</text><text x="0" y="0" font-family="Liberation Serif" font-style="italic" font-size="9" fill="#444" transform="translate(271,974) rotate(-62)">Back</text><text x="0" y="0" font-family="Liberation Serif" font-size="9" fill="#444" transform="translate(314,994) rotate(-48) scale(-1,1)">Front</text><line x1="344.9" y1="993" x2="344.9" y2="938" stroke="#7b7bc8" stroke-width="2.4"/><polygon points="339.2,938.8 350.8,938.8 344.9,927.6" fill="#7b7bc8"/><text x="341.3" y="918.5" font-family="Liberation Sans" font-size="9" fill="#7b7bc8">z</text><line x1="344.7" y1="992.6" x2="290" y2="984.6" stroke="#6cc06c" stroke-width="2.4"/><polygon points="280.3,982.8 291.2,978.6 290,990.2" fill="#6cc06c"/><text x="263.6" y="987" font-family="Liberation Sans" font-size="9" fill="#6cc06c">y</text><line x1="344.7" y1="993.1" x2="325" y2="1009" stroke="#c87b7b" stroke-width="2.4"/><polygon points="316,1017 319.5,1005.5 328.5,1012.5" fill="#c87b7b"/><circle cx="393.5" cy="999.8" r="17.6" fill="#f5f5f5"/><g fill="none" stroke="#555" stroke-width="1.6" stroke-linecap="round"><path d="M383.9,996.5 v-3 a1.8,1.8 0 0 1 1.8,-1.8 h3.4"/><path d="M397.9,991.7 h3.4 a1.8,1.8 0 0 1 1.8,1.8 v3"/><path d="M403.1,1004 v3 a1.8,1.8 0 0 1 -1.8,1.8 h-3.4"/><path d="M389.1,1008.8 h-3.4 a1.8,1.8 0 0 1 -1.8,-1.8 v-3"/></g><g fill="none" stroke="#555" stroke-width="1.3" stroke-linejoin="round"><polygon points="393.5,995 399,998 399,1004 393.5,1007 388,1004 388,998"/><polyline points="388,998 393.5,1001 399,998"/><line x1="393.5" y1="1001" x2="393.5" y2="1007"/></g><path d="M841.4,601.2 L841.4,617.5 L845.3,614.4 L848.9,619.5 L850.7,618.3 L848.8,613.6 L852.6,612.8 Z" fill="#fff" stroke="#111" stroke-width="1" stroke-linejoin="round"/></svg>
</body></html>
